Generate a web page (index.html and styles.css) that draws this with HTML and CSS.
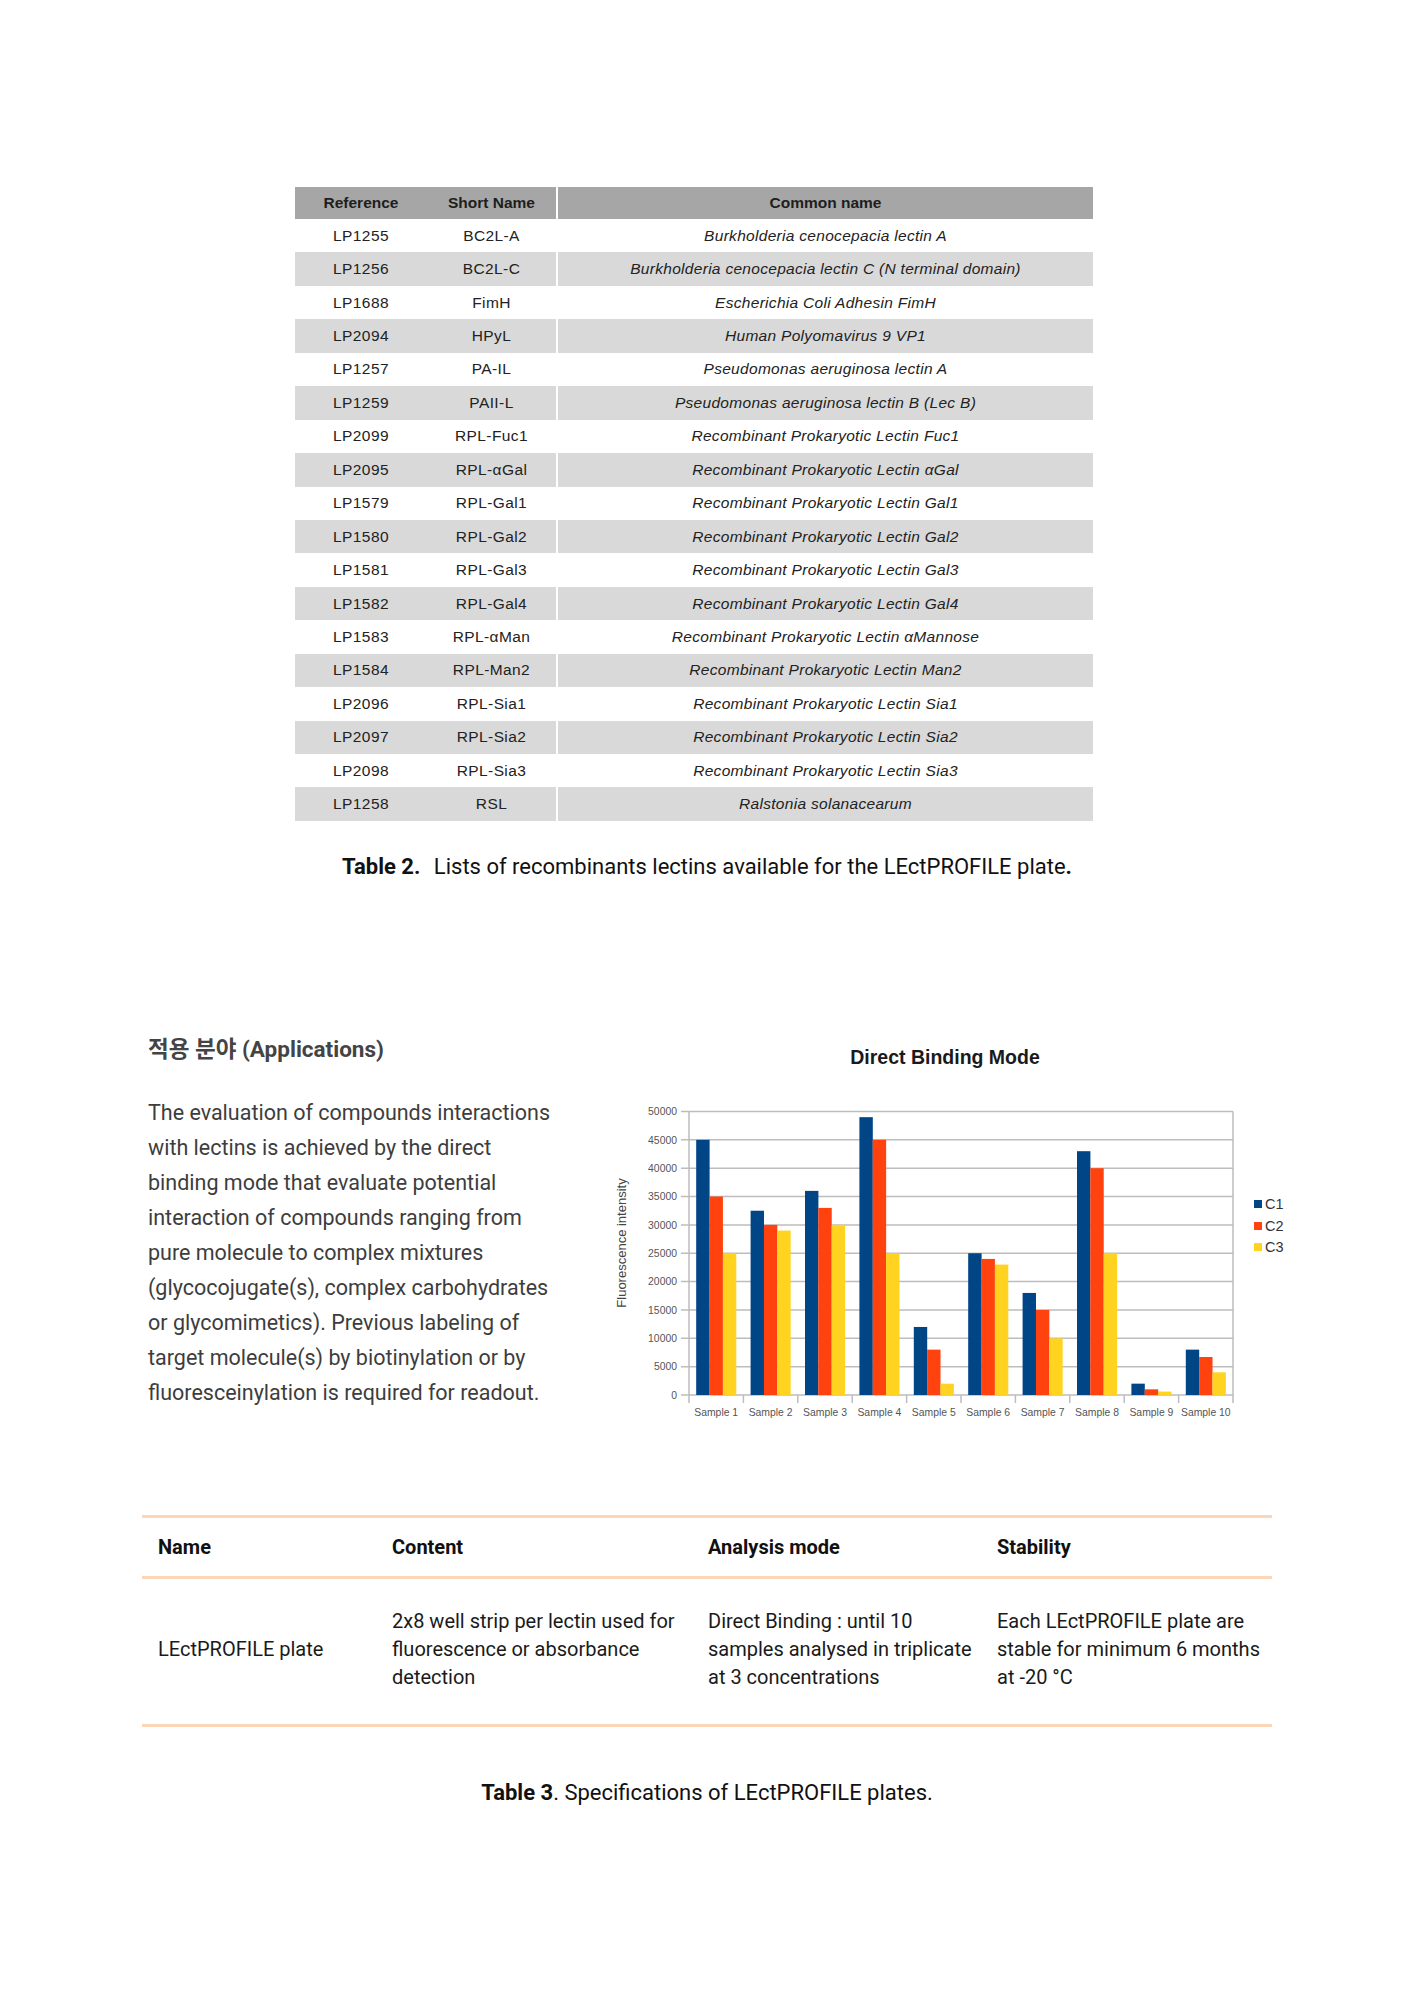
FILE: index.html
```html
<!DOCTYPE html>
<html lang="ko">
<head>
<meta charset="utf-8">
<title>LEctPROFILE</title>
<link rel="stylesheet" href="styles.css">
</head>
<body>
<main class="page">
  <section class="lectins">
    <table class="lectin-table">
      <colgroup><col class="c-ref"><col class="c-short"><col class="c-common"></colgroup>
      <thead>
        <tr><th>Reference</th><th>Short Name</th><th class="common">Common name</th></tr>
      </thead>
      <tbody>
        <tr><td>LP1255</td><td>BC2L-A</td><td class="common">Burkholderia cenocepacia lectin A</td></tr>
        <tr><td>LP1256</td><td>BC2L-C</td><td class="common">Burkholderia cenocepacia lectin C (N terminal domain)</td></tr>
        <tr><td>LP1688</td><td>FimH</td><td class="common">Escherichia Coli Adhesin FimH</td></tr>
        <tr><td>LP2094</td><td>HPyL</td><td class="common">Human Polyomavirus 9 VP1</td></tr>
        <tr><td>LP1257</td><td>PA-IL</td><td class="common">Pseudomonas aeruginosa lectin A</td></tr>
        <tr><td>LP1259</td><td>PAII-L</td><td class="common">Pseudomonas aeruginosa lectin B (Lec B)</td></tr>
        <tr><td>LP2099</td><td>RPL-Fuc1</td><td class="common">Recombinant Prokaryotic Lectin Fuc1</td></tr>
        <tr><td>LP2095</td><td>RPL-αGal</td><td class="common">Recombinant Prokaryotic Lectin αGal</td></tr>
        <tr><td>LP1579</td><td>RPL-Gal1</td><td class="common">Recombinant Prokaryotic Lectin Gal1</td></tr>
        <tr><td>LP1580</td><td>RPL-Gal2</td><td class="common">Recombinant Prokaryotic Lectin Gal2</td></tr>
        <tr><td>LP1581</td><td>RPL-Gal3</td><td class="common">Recombinant Prokaryotic Lectin Gal3</td></tr>
        <tr><td>LP1582</td><td>RPL-Gal4</td><td class="common">Recombinant Prokaryotic Lectin Gal4</td></tr>
        <tr><td>LP1583</td><td>RPL-αMan</td><td class="common">Recombinant Prokaryotic Lectin αMannose</td></tr>
        <tr><td>LP1584</td><td>RPL-Man2</td><td class="common">Recombinant Prokaryotic Lectin Man2</td></tr>
        <tr><td>LP2096</td><td>RPL-Sia1</td><td class="common">Recombinant Prokaryotic Lectin Sia1</td></tr>
        <tr><td>LP2097</td><td>RPL-Sia2</td><td class="common">Recombinant Prokaryotic Lectin Sia2</td></tr>
        <tr><td>LP2098</td><td>RPL-Sia3</td><td class="common">Recombinant Prokaryotic Lectin Sia3</td></tr>
        <tr><td>LP1258</td><td>RSL</td><td class="common">Ralstonia solanacearum</td></tr>
      </tbody>
    </table>
    <p class="caption caption-2"><b class="cap-label">Table 2.</b> Lists of recombinants lectins available for the LEctPROFILE plate<b>.</b></p>
  </section>

  <section class="applications">
    <div class="app-text">
      <h2 class="app-title">적용 분야 (Applications)</h2>
      <p class="app-body">The evaluation of compounds interactions<br>with lectins is achieved by the direct<br>binding mode that evaluate potential<br>interaction of compounds ranging from<br>pure molecule to complex mixtures<br>(glycocojugate(s), complex carbohydrates<br>or glycomimetics). Previous labeling of<br>target molecule(s) by biotinylation or by<br>fluoresceinylation is required for readout.</p>
    </div>
    <figure class="chart">
      <svg class="chart-svg" width="700" height="420" viewBox="0 0 700 420" xmlns="http://www.w3.org/2000/svg">
        <text class="chart-title" x="345" y="34" text-anchor="middle">Direct Binding Mode</text>
        <g class="grid">
          <line x1="81" y1="365" x2="633" y2="365"/>
          <line x1="81" y1="336.65" x2="633" y2="336.65"/>
          <line x1="81" y1="308.3" x2="633" y2="308.3"/>
          <line x1="81" y1="279.95" x2="633" y2="279.95"/>
          <line x1="81" y1="251.6" x2="633" y2="251.6"/>
          <line x1="81" y1="223.25" x2="633" y2="223.25"/>
          <line x1="81" y1="194.9" x2="633" y2="194.9"/>
          <line x1="81" y1="166.55" x2="633" y2="166.55"/>
          <line x1="81" y1="138.2" x2="633" y2="138.2"/>
          <line x1="81" y1="109.85" x2="633" y2="109.85"/>
          <line x1="81" y1="81.5" x2="633" y2="81.5"/>
          <line x1="89" y1="81.5" x2="89" y2="373"/>
          <line x1="633" y1="81.5" x2="633" y2="373"/>
          <line x1="143.4" y1="365" x2="143.4" y2="373"/>
          <line x1="197.8" y1="365" x2="197.8" y2="373"/>
          <line x1="252.2" y1="365" x2="252.2" y2="373"/>
          <line x1="306.6" y1="365" x2="306.6" y2="373"/>
          <line x1="361" y1="365" x2="361" y2="373"/>
          <line x1="415.4" y1="365" x2="415.4" y2="373"/>
          <line x1="469.8" y1="365" x2="469.8" y2="373"/>
          <line x1="524.2" y1="365" x2="524.2" y2="373"/>
          <line x1="578.6" y1="365" x2="578.6" y2="373"/>
        </g>
        <g class="ylabels" text-anchor="end">
          <text x="77" y="368.7">0</text>
          <text x="77" y="340.35">5000</text>
          <text x="77" y="312">10000</text>
          <text x="77" y="283.65">15000</text>
          <text x="77" y="255.3">20000</text>
          <text x="77" y="226.95">25000</text>
          <text x="77" y="198.6">30000</text>
          <text x="77" y="170.25">35000</text>
          <text x="77" y="141.9">40000</text>
          <text x="77" y="113.55">45000</text>
          <text x="77" y="85.2">50000</text>
        </g>
        <text class="ytitle" transform="translate(26 213) rotate(-90)" text-anchor="middle">Fluorescence intensity</text>
        <g class="bars" transform="translate(89 365) scale(1 -0.00567)">
          <rect class="s1" x="7.2" y="0" width="13.4" height="45000"/>
          <rect class="s2" x="20.53" y="0" width="13.4" height="35000"/>
          <rect class="s3" x="33.87" y="0" width="13.4" height="25000"/>
          <rect class="s1" x="61.6" y="0" width="13.4" height="32500"/>
          <rect class="s2" x="74.93" y="0" width="13.4" height="30000"/>
          <rect class="s3" x="88.27" y="0" width="13.4" height="29000"/>
          <rect class="s1" x="116" y="0" width="13.4" height="36000"/>
          <rect class="s2" x="129.33" y="0" width="13.4" height="33000"/>
          <rect class="s3" x="142.67" y="0" width="13.4" height="30000"/>
          <rect class="s1" x="170.4" y="0" width="13.4" height="49000"/>
          <rect class="s2" x="183.73" y="0" width="13.4" height="45000"/>
          <rect class="s3" x="197.07" y="0" width="13.4" height="25000"/>
          <rect class="s1" x="224.8" y="0" width="13.4" height="12000"/>
          <rect class="s2" x="238.13" y="0" width="13.4" height="8000"/>
          <rect class="s3" x="251.47" y="0" width="13.4" height="2000"/>
          <rect class="s1" x="279.2" y="0" width="13.4" height="25000"/>
          <rect class="s2" x="292.53" y="0" width="13.4" height="24000"/>
          <rect class="s3" x="305.87" y="0" width="13.4" height="23000"/>
          <rect class="s1" x="333.6" y="0" width="13.4" height="18000"/>
          <rect class="s2" x="346.93" y="0" width="13.4" height="15000"/>
          <rect class="s3" x="360.27" y="0" width="13.4" height="10000"/>
          <rect class="s1" x="388" y="0" width="13.4" height="43000"/>
          <rect class="s2" x="401.33" y="0" width="13.4" height="40000"/>
          <rect class="s3" x="414.67" y="0" width="13.4" height="25000"/>
          <rect class="s1" x="442.4" y="0" width="13.4" height="2000"/>
          <rect class="s2" x="455.73" y="0" width="13.4" height="1000"/>
          <rect class="s3" x="469.07" y="0" width="13.4" height="600"/>
          <rect class="s1" x="496.8" y="0" width="13.4" height="8000"/>
          <rect class="s2" x="510.13" y="0" width="13.4" height="6700"/>
          <rect class="s3" x="523.47" y="0" width="13.4" height="4000"/>
        </g>
        <g class="xlabels" text-anchor="middle">
          <text x="116.2" y="386">Sample 1</text>
          <text x="170.6" y="386">Sample 2</text>
          <text x="225" y="386">Sample 3</text>
          <text x="279.4" y="386">Sample 4</text>
          <text x="333.8" y="386">Sample 5</text>
          <text x="388.2" y="386">Sample 6</text>
          <text x="442.6" y="386">Sample 7</text>
          <text x="497" y="386">Sample 8</text>
          <text x="551.4" y="386">Sample 9</text>
          <text x="605.8" y="386">Sample 10</text>
        </g>
        <g class="legend">
          <rect class="s1" x="654" y="170" width="8" height="8"/>
          <text x="665" y="179">C1</text>
          <rect class="s2" x="654" y="192" width="8" height="8"/>
          <text x="665" y="201">C2</text>
          <rect class="s3" x="654" y="213" width="8" height="8"/>
          <text x="665" y="222">C3</text>
        </g>
      </svg>
    </figure>
  </section>

  <section class="specs">
    <table class="spec-table">
      <colgroup><col class="c-name"><col class="c-content"><col class="c-mode"><col class="c-stab"></colgroup>
      <thead>
        <tr><th>Name</th><th>Content</th><th>Analysis mode</th><th>Stability</th></tr>
      </thead>
      <tbody>
        <tr>
          <td>LEctPROFILE plate</td>
          <td>2x8 well strip per lectin used for<br>fluorescence or absorbance<br>detection</td>
          <td>Direct Binding : until 10<br>samples analysed in triplicate<br>at 3 concentrations</td>
          <td>Each LEctPROFILE plate are<br>stable for minimum 6 months<br>at -20 °C</td>
        </tr>
      </tbody>
    </table>
    <p class="caption caption-3"><b>Table 3</b>. Specifications of LEctPROFILE plates.</p>
  </section>
</main>
</body>
</html>
```

FILE: styles.css
```css
html, body {
  margin: 0;
  padding: 0;
  background: #ffffff;
}

.page {
  width: 1414px;
  padding-top: 187px;
  font-family: Roboto, "Noto Sans CJK KR", sans-serif;
  color: #111;
}

/* ---------- Table 2 ---------- */
.lectin-table {
  margin-left: 295px;
  width: 798px;
  border-collapse: collapse;
  table-layout: fixed;
  font-family: "Liberation Sans", Arial, sans-serif;
  font-size: 15.5px;
  letter-spacing: 0.4px;
  color: #222;
}
.c-ref { width: 132px; }
.c-short { width: 130px; }
.c-common { width: 536px; }

.lectin-table th,
.lectin-table td {
  padding: 0;
  text-align: center;
  white-space: nowrap;
}
.lectin-table thead tr {
  height: 32px;
  background: #a6a6a6;
}
.lectin-table th {
  font-weight: bold;
  letter-spacing: 0;
  color: #1e1e1e;
}
.lectin-table tbody tr {
  height: 33.44px;
}
.lectin-table tbody tr:nth-child(even) {
  background: #d9d9d9;
}
.lectin-table .common {
  border-left: 2px solid #ffffff;
}
.lectin-table td.common {
  font-style: italic;
  letter-spacing: 0.3px;
}

.caption {
  margin: 0;
  text-align: center;
  font-size: 22px;
  line-height: 30px;
  color: #111;
}
.caption b {
  font-weight: 700;
}
.caption-2 {
  margin-top: 31px;
}
.cap-label {
  margin-right: 8px;
}

/* ---------- Applications ---------- */
.applications {
  display: flex;
  margin-top: 148.5px;
  padding-left: 148px;
}
.app-text {
  width: 452px;
  flex: none;
}
.app-title {
  margin: 0;
  font-size: 22.5px;
  line-height: 38px;
  font-weight: 700;
  color: #444;
}
.app-body {
  margin: 26.5px 0 0;
  font-size: 21.5px;
  line-height: 35px;
  color: #3d3d3d;
}
.chart {
  margin: -0.5px 0 0;
}
.chart-svg {
  display: block;
  font-family: "Liberation Sans", Arial, sans-serif;
}
.chart-title {
  font-size: 19.5px;
  font-weight: bold;
  fill: #1a1a1a;
}
.grid line {
  stroke: #bdbdbd;
  stroke-width: 1.5;
}
.ylabels text,
.xlabels text {
  font-size: 10.4px;
  fill: #555;
}
.ytitle {
  font-size: 13px;
  fill: #444;
}
.s1 { fill: #004586; }
.s2 { fill: #ff420e; }
.s3 { fill: #ffd320; }
.legend text {
  font-size: 14.5px;
  fill: #333;
}

/* ---------- Table 3 ---------- */
.specs {
  margin-top: 65px;
}
.spec-table {
  margin-left: 142px;
  width: 1130px;
  border-collapse: separate;
  border-spacing: 0;
  table-layout: fixed;
  font-size: 20px;
  color: #1a1a1a;
}
.c-name { width: 234px; }
.c-content { width: 316px; }
.c-mode { width: 289px; }
.c-stab { width: 291px; }

.spec-table th {
  padding: 0 16px;
  line-height: 58px;
  text-align: left;
  font-weight: 700;
  color: #111;
  border-top: 3px solid #fcd6b6;
  border-bottom: 3px solid #fcd6b6;
}
.spec-table td {
  padding: 28px 16px 32px;
  line-height: 28.3px;
  vertical-align: middle;
  white-space: nowrap;
  border-bottom: 3px solid #fcd6b6;
}

.caption-3 {
  margin-top: 51px;
}
```
